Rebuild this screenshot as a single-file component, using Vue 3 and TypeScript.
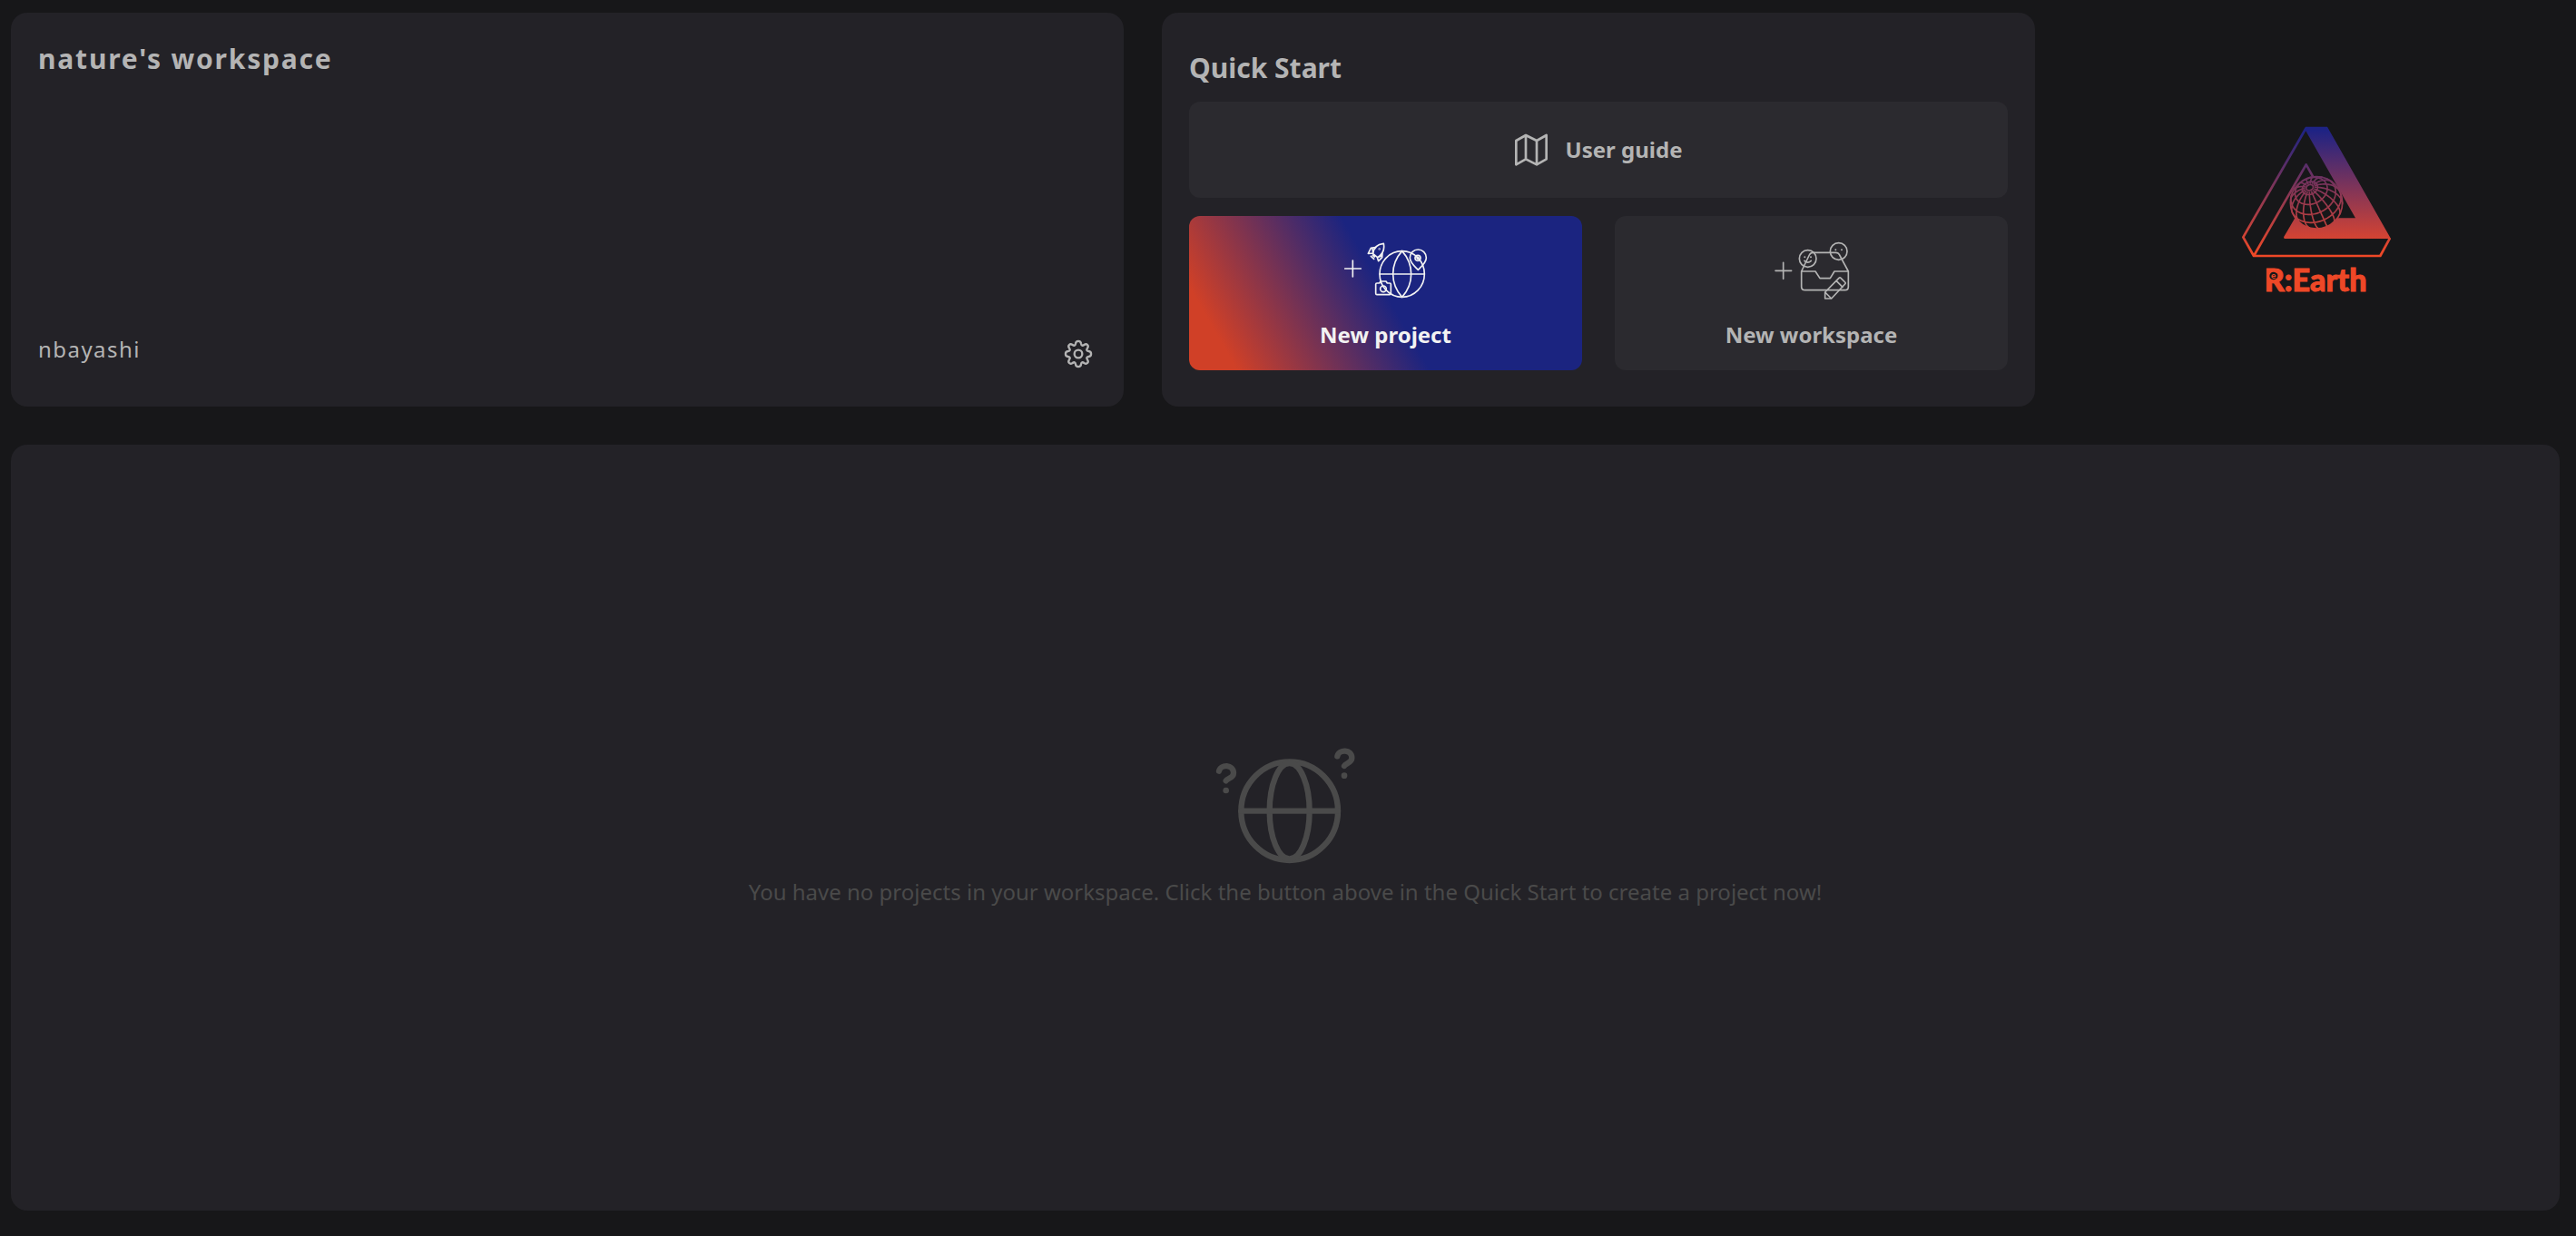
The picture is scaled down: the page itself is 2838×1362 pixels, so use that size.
<script setup lang="ts">
interface Globe {
  cx: number
  cy: number
  r: number
  tilt: number
  roll: number
}

const globe: Globe = { cx: 336, cy: 311, r: 86, tilt: 40, roll: -24 }
const rad = (deg: number): number => (deg * Math.PI) / 180

// Orthographic projection of a point given by its distance from the pole and its longitude.
function project(colat: number, lon: number): { x: number; y: number; z: number } {
  const c = rad(colat)
  const l = rad(lon)
  const x = Math.sin(c) * Math.sin(l)
  const y0 = -Math.sin(c) * Math.cos(l)
  const z0 = Math.cos(c)
  const t = rad(globe.tilt)
  const y = y0 * Math.cos(t) + z0 * Math.sin(t)
  const z = z0 * Math.cos(t) - y0 * Math.sin(t)
  const a = rad(globe.roll)
  return {
    x: globe.cx + globe.r * (x * Math.cos(a) + y * Math.sin(a)),
    y: globe.cy - globe.r * (y * Math.cos(a) - x * Math.sin(a)),
    z,
  }
}

function trace(points: { x: number; y: number; z: number }[]): string {
  let path = ''
  let pen = false
  for (const p of points) {
    if (p.z < 0) {
      pen = false
      continue
    }
    path += `${pen ? 'L' : 'M'}${p.x.toFixed(1)} ${p.y.toFixed(1)}`
    pen = true
  }
  return path
}

const range = (from: number, to: number, step: number): number[] =>
  Array.from({ length: Math.floor((to - from) / step) + 1 }, (_, i) => from + i * step)

const parallels = [8, 18, 40, 63, 86].map((c) => trace(range(0, 360, 4).map((l) => project(c, l))))
const meridians = range(0, 340, 22.5).map((l) => trace(range(11, 140, 3).map((c) => project(c, l))))
const graticule = [...parallels, ...meridians].join('')
</script>

<template>
  <main class="dashboard">
    <div class="top-row">
      <section class="card workspace">
        <h1 class="title spaced">nature's workspace</h1>
        <div class="workspace-footer">
          <span class="user spaced">nbayashi</span>
          <button class="icon-button" type="button" aria-label="Workspace settings">
            <svg width="40" height="40" viewBox="-60 -60 120 120" fill="none" stroke="currentColor" stroke-width="7" stroke-linejoin="round">
              <circle r="13" />
              <path d="M-9 -34C-8 -45 8 -45 9 -34C10 -27 14 -26 19 -30C28 -36 36 -28 30 -19C26 -14 27 -10 34 -9C45 -8 45 8 34 9C27 10 26 14 30 19C36 28 28 36 19 30C14 26 10 27 9 34C8 45 -8 45 -9 34C-10 27 -14 26 -19 30C-28 36 -36 28 -30 19C-26 14 -27 10 -34 9C-45 8 -45 -8 -34 -9C-27 -10 -26 -14 -30 -19C-36 -28 -28 -36 -19 -30C-14 -26 -10 -27 -9 -34Z" />
            </svg>
          </button>
        </div>
      </section>

      <section class="card quick-start">
        <h2 class="title">Quick Start</h2>
        <div class="actions">
          <a class="action guide" href="#guide">
            <svg width="36" height="36" viewBox="0 0 108 108" fill="none" stroke="currentColor" stroke-width="8" stroke-linejoin="round">
              <path d="M4 24L36 6L72 24L104 6V85L72 103L36 85L4 103ZM36 6V85M72 24V103" />
            </svg>
            <span>User guide</span>
          </a>
          <button class="action create primary" type="button">
            <svg width="92" height="64" viewBox="60 48 276 192" fill="none" stroke="currentColor" stroke-width="5" stroke-linejoin="round" stroke-linecap="round">
              <path d="M62 138H115M88 111V165" />
              <ellipse cx="251" cy="156" rx="74" ry="76" />
              <path d="M177 156H325M251 80C211 124 211 188 251 232C291 188 291 124 251 80" />
              <path d="M304 142C291 129 277 118 277 102A27 27 0 0 1 331 102C331 118 317 129 304 142Z" />
              <circle cx="303" cy="103" r="9" />
              <circle cx="303" cy="103" r="3" />
              <path d="M168 186H176L180 180H198L202 186H210Q214 186 214 190V220Q214 224 210 224H168Q164 224 164 220V190Q164 186 168 186Z" />
              <circle cx="189" cy="205" r="10" />
              <path d="M155 89C157 68 171 57 190 55C194 75 186 91 170 101ZM162 68L148 70L139 88L155 87M186 86L185 101L173 113L169 101M170 101L183 96M155 87L153 71M148 97L158 106M154 94L160 99" />
              <circle cx="176" cy="73" r="1" />
            </svg>
            <span>New project</span>
          </button>
          <button class="action create" type="button">
            <svg width="92" height="64" viewBox="28 48 276 192" fill="none" stroke="currentColor" stroke-width="5" stroke-linejoin="round" stroke-linecap="round">
              <path d="M46 145H99M72 118V172" />
              <path d="M132 147H178L193 170H227L241 147H287V198Q287 209 276 209H144Q132 209 132 198ZM132 147L158 93Q162 85 170 85H246Q254 85 258 93L287 147" />
              <circle cx="153" cy="105" r="28" />
              <circle cx="255" cy="81" r="28" />
              <path d="M142 112Q153 123 164 112" />
              <path d="M143 100V100M163 100V100M245 76V76M265 76V76" stroke-width="6" />
              <path d="M210 216L256 169Q259 166 262 169L276 183Q279 186 276 189L231 237H210ZM210 216L231 237M247 178L268 199" />
            </svg>
            <span>New workspace</span>
          </button>
        </div>
      </section>

      <div class="brand">
        <svg width="168" height="200" viewBox="84 34 504 600" role="img" aria-label="R:Earth">
          <defs>
            <linearGradient id="brand-fade" gradientUnits="userSpaceOnUse" x1="0" y1="72" x2="0" y2="480">
              <stop offset="0" stop-color="#1e2384" />
              <stop offset="1" stop-color="#ee4827" />
            </linearGradient>
          </defs>
          <path d="M300 60H372L582 430H230L228 425L265 362H465L300 72Z" fill="url(#brand-fade)" />
          <path d="M302 64L94 425L129 487H547L579 428M129 487L302 185L328 231" fill="none" stroke="url(#brand-fade)" stroke-width="8" stroke-linejoin="round" />
          <circle :cx="globe.cx" :cy="globe.cy" :r="globe.r" fill="#171719" stroke="url(#brand-fade)" stroke-width="5" />
          <path :d="graticule" fill="none" stroke="url(#brand-fade)" stroke-width="5" />
          <text class="wordmark" x="164" y="605">R:Earth</text>
          <circle cx="194" cy="553" r="13" fill="#171719" />
          <text class="wordmark-inset" x="194" y="561" text-anchor="middle">e</text>
        </svg>
      </div>
    </div>

    <section class="card empty">
      <svg width="154" height="130" viewBox="57 39 462 390" fill="none" stroke="currentColor" stroke-width="19" stroke-linecap="round" stroke-linejoin="round">
        <ellipse cx="302" cy="251" rx="160" ry="163" />
        <ellipse cx="302" cy="251" rx="66" ry="158" />
        <path d="M142 251H462" />
        <path d="M69 119C74 96 117 96 117 126C117 142 98 142 92 151" />
        <path d="M460 70C465 46 508 46 508 76C508 92 488 93 483 102" />
        <circle cx="92" cy="183" r="10" fill="currentColor" stroke="none" />
        <circle cx="483" cy="134" r="10" fill="currentColor" stroke="none" />
      </svg>
      <p>You have no projects in your workspace. Click the button above in the Quick Start to create a project now!</p>
    </section>
  </main>
</template>

<style>
body {
  margin: 0;
  background: #171719;
}
</style>

<style scoped>
.dashboard {
  box-sizing: border-box;
  min-height: 100vh;
  padding: 14px 18px 28px 12px;
  display: flex;
  flex-direction: column;
  gap: 42px;
  background: #171719;
  color: #b4b4b4;
  font-family: "Noto Sans", sans-serif;
  font-size: 24px;
  line-height: 32px;
}

.top-row {
  display: grid;
  grid-template-columns: 613fr 481fr 268fr;
  gap: 42px;
}

.card {
  box-sizing: border-box;
  border-radius: 18px;
  background: #232227;
}

.workspace {
  padding: 30px 30px 38px;
  display: flex;
  flex-direction: column;
  justify-content: space-between;
}

.title {
  margin: 0;
  font-size: 30px;
  line-height: 42px;
  font-weight: 700;
}

.spaced {
  letter-spacing: 0.06em;
}

.workspace-footer {
  display: flex;
  justify-content: space-between;
  align-items: flex-start;
}

.user {
  line-height: 30px;
}

.icon-button {
  padding: 0;
  border: 0;
  background: none;
  color: inherit;
  display: flex;
}

.quick-start {
  padding: 40px 30px;
  display: flex;
  flex-direction: column;
  gap: 16px;
}

.actions {
  display: grid;
  grid-template-columns: 1fr 1fr;
  gap: 20px 36px;
}

.action {
  box-sizing: border-box;
  padding: 0;
  border: 0;
  border-radius: 12px;
  background: #2b2a2f;
  color: inherit;
  font: inherit;
  font-weight: 700;
  text-decoration: none;
  display: flex;
  align-items: center;
}

.guide {
  grid-column: 1 / -1;
  padding: 35px 0;
  justify-content: center;
  gap: 20px;
}

.create {
  padding: 28px 0 23px;
  flex-direction: column;
  gap: 23px;
}

.primary {
  background: linear-gradient(60deg, #d04027 10%, #1b2480 50%);
  color: #f2f2f2;
}

.brand {
  display: flex;
  align-items: center;
  justify-content: center;
}

.wordmark,
.wordmark-inset {
  font-family: Lato, sans-serif;
  font-weight: 900;
  fill: #ee4827;
}

.wordmark {
  font-size: 102px;
  stroke: #ee4827;
  stroke-width: 3px;
}

.wordmark-inset {
  font-size: 30px;
}

.empty {
  flex: 1;
  padding-bottom: 3px;
  display: flex;
  flex-direction: column;
  align-items: center;
  justify-content: center;
  gap: 14px;
  color: #4a4a4a;
}

.empty p {
  margin: 0;
}
</style>
